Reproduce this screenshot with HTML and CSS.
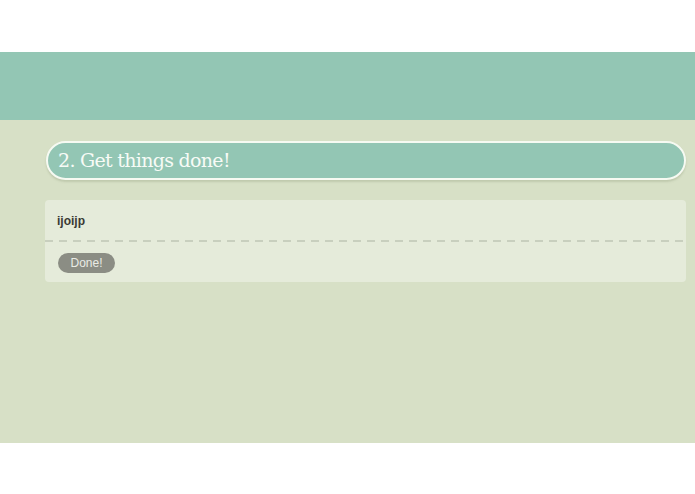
FILE: index.html
```html
<!DOCTYPE html>
<html>
<head>
<meta charset="utf-8">
<link rel="stylesheet" href="styles.css">
</head>
<body>
  <div class="top-gap"></div>
  <header class="banner"></header>
  <main class="board">
    <h2 class="step-title">2. Get things done!</h2>
    <section class="task-card">
      <div class="task-name">ijoijp</div>
      <div class="task-actions">
        <button class="done-btn">Done!</button>
      </div>
    </section>
  </main>
</body>
</html>
```
FILE: styles.css
```css
html, body {
  margin: 0;
  padding: 0;
  background: #ffffff;
}

.top-gap {
  height: 52px;
}

.banner {
  height: 68px;
  background: #93c6b4;
}

.board {
  height: 323px;
  box-sizing: border-box;
  background: #d7e0c6;
  padding: 21px 9px 0 46px;
}

.step-title {
  margin: 0;
  height: 39px;
  box-sizing: border-box;
  border: 2px solid #f6faf2;
  border-radius: 20px;
  background: #93c6b4;
  color: #f7fbf6;
  font-family: "DejaVu Serif", "Liberation Serif", serif;
  font-weight: normal;
  font-size: 19px;
  letter-spacing: -0.7px;
  line-height: 34px;
  padding-left: 10px;
  box-shadow: 0 2px 2px rgba(150, 160, 130, 0.35);
}

.task-card {
  margin-top: 20px;
  margin-left: -1px;
  background: #e5ebda;
  border-radius: 4px;
  overflow: hidden;
}

.task-name {
  height: 42px;
  box-sizing: border-box;
  padding: 14px 0 0 12px;
  font-family: "Liberation Sans", Arial, sans-serif;
  font-size: 12px;
  font-weight: bold;
  color: #3a3a34;
  background-image: repeating-linear-gradient(90deg, #c8cfbe 0 8px, transparent 8px 14px);
  background-size: 100% 2px;
  background-position: 0 100%;
  background-repeat: no-repeat;
}

.task-actions {
  height: 40px;
  box-sizing: border-box;
  padding: 11px 0 0 13px;
}

.done-btn {
  display: block;
  height: 20px;
  width: 57px;
  padding: 0;
  border: none;
  border-radius: 10px;
  background: #8b8d84;
  color: #e9ebe4;
  font-family: "Liberation Sans", Arial, sans-serif;
  font-size: 12px;
  line-height: 20px;
}
```
